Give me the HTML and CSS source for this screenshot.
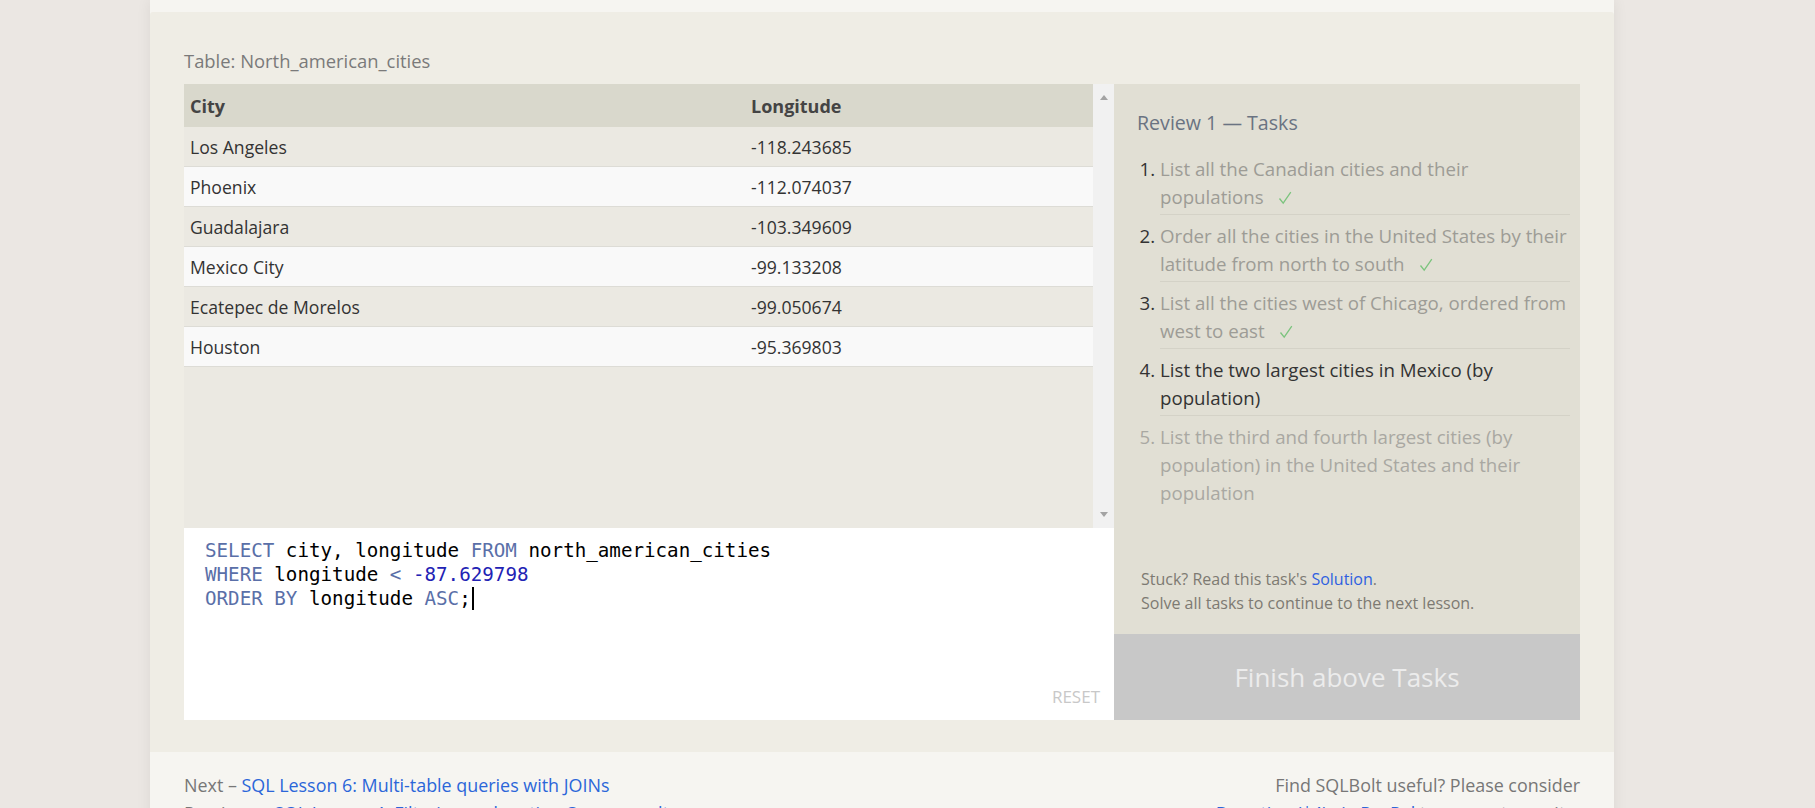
FILE: index.html
```html
<!DOCTYPE html>
<html>
<head>
<meta charset="utf-8">
<title>SQLBolt - Review 1</title>
<link rel="stylesheet" href="styles.css">
</head>
<body>
<div class="page">
  <div class="topband"></div>
  <div class="main">
    <div class="caption">Table: North_american_cities</div>
    <div class="exercise">
      <div class="left">
        <div class="results">
          <div class="table-wrap">
            <table>
              <thead>
                <tr><th class="c1">City</th><th>Longitude</th></tr>
              </thead>
              <tbody>
                <tr><td>Los Angeles</td><td>-118.243685</td></tr>
                <tr><td>Phoenix</td><td>-112.074037</td></tr>
                <tr><td>Guadalajara</td><td>-103.349609</td></tr>
                <tr><td>Mexico City</td><td>-99.133208</td></tr>
                <tr><td>Ecatepec de Morelos</td><td>-99.050674</td></tr>
                <tr><td>Houston</td><td>-95.369803</td></tr>
              </tbody>
            </table>
          </div>
          <div class="scrollbar"><span class="arrow up"></span><span class="arrow down"></span></div>
        </div>
        <div class="editor">
          <pre class="code"><span class="kw">SELECT</span> city, longitude <span class="kw">FROM</span> north_american_cities
<span class="kw">WHERE</span> longitude <span class="kw">&lt;</span> <span class="num">-87.629798</span>
<span class="kw">ORDER BY</span> longitude <span class="kw">ASC</span>;<span class="cursor"></span></pre>
          <div class="reset">RESET</div>
        </div>
      </div>
      <div class="right">
        <div class="tasks">
          <h3>Review 1 — Tasks</h3>
          <ol>
            <li class="done"><span class="t">List all the Canadian cities and their populations</span><svg class="check" width="14" height="14" viewBox="0 0 14 14"><path d="M1.5 7.5 L5.2 12.2 L12.8 1.2" fill="none" stroke="#7cc47e" stroke-width="1.3"/></svg></li>
            <li class="done"><span class="t">Order all the cities in the United States by their latitude from north to south</span><svg class="check" width="14" height="14" viewBox="0 0 14 14"><path d="M1.5 7.5 L5.2 12.2 L12.8 1.2" fill="none" stroke="#7cc47e" stroke-width="1.3"/></svg></li>
            <li class="done"><span class="t">List all the cities west of Chicago, ordered from west to east</span><svg class="check" width="14" height="14" viewBox="0 0 14 14"><path d="M1.5 7.5 L5.2 12.2 L12.8 1.2" fill="none" stroke="#7cc47e" stroke-width="1.3"/></svg></li>
            <li class="current">List the two largest cities in Mexico (by population)</li>
            <li class="todo">List the third and fourth largest cities (by population) in the United States and their population</li>
          </ol>
          <div class="hint">
            <div>Stuck? Read this task's <a href="#">Solution</a>.</div>
            <div>Solve all tasks to continue to the next lesson.</div>
          </div>
        </div>
        <div class="finish">Finish above Tasks</div>
      </div>
    </div>
  </div>
  <div class="footer">
    <div class="nav">
      <div>Next – <a href="#">SQL Lesson 6: Multi-table queries with JOINs</a></div>
      <div>Previous – <a href="#">SQL Lesson 4: Filtering and sorting Query results</a></div>
    </div>
    <div class="support">
      <div>Find SQLBolt useful? Please consider</div>
      <div><a href="#">Donating ($4) via PayPal</a> to support our site.</div>
    </div>
  </div>
</div>
</body>
</html>
```

FILE: styles.css
```css
html, body {
  margin: 0;
  padding: 0;
}
body {
  background: #ebe7e3;
  font-family: "Open Sans", "Noto Sans", sans-serif;
  overflow: hidden;
}
.page {
  width: 1464px;
  margin-left: 150px;
  background: #f6f5f1;
  box-shadow: 0 0 14px rgba(0, 0, 0, 0.07);
}
.topband {
  height: 12px;
  background: #f6f5f1;
}
.main {
  background: #efede5;
  padding: 37px 34px 32px;
  border-radius: 3px 3px 0 0;
}
.caption {
  font-size: 18.4px;
  line-height: 24px;
  color: #7a7a7a;
  margin-bottom: 11px;
}
.exercise {
  display: flex;
  height: 636px;
}
.left {
  width: 930px;
  display: flex;
  flex-direction: column;
}
.results {
  height: 444px;
  display: flex;
}
.table-wrap {
  flex: 1;
  background: #ebe9e2;
}
.scrollbar {
  width: 21px;
  background: #f1f1f1;
  display: flex;
  flex-direction: column;
  justify-content: space-between;
  align-items: center;
  padding: 11px 0;
  box-sizing: border-box;
}
.arrow {
  width: 0;
  height: 0;
  border-left: 4px solid transparent;
  border-right: 4px solid transparent;
}
.arrow.up {
  border-bottom: 5px solid #a3a3a3;
}
.arrow.down {
  border-top: 5px solid #a3a3a3;
}
table {
  width: 100%;
  border-collapse: collapse;
  font-size: 17.6px;
  color: #333;
}
th {
  background: #d9d8cc;
  height: 43px;
  text-align: left;
  padding: 0 6px;
  font-size: 18px;
  font-weight: 700;
  color: #444;
}
th.c1 {
  width: 549px;
}
td {
  height: 39px;
  padding: 0 6px;
  border-bottom: 1px solid #dddcd6;
}
tbody tr:nth-child(odd) td {
  background: #ebe9e2;
}
tbody tr:nth-child(even) td {
  background: #f9f9f9;
}
.editor {
  flex: 1;
  background: #fff;
  display: flex;
  flex-direction: column;
  padding: 11px 14px 12px 21px;
}
.code {
  margin: 0;
  flex: 1;
  font-family: "DejaVu Sans Mono", monospace;
  font-size: 19.2px;
  line-height: 24px;
  color: #000;
}
.kw {
  color: #5a6fa8;
}
.num {
  color: #2222b4;
}
.cursor {
  display: inline-block;
  width: 2px;
  height: 23px;
  background: #000;
  vertical-align: -5px;
  margin-left: 1px;
}
.reset {
  align-self: flex-end;
  font-size: 17px;
  line-height: 22px;
  color: #c8c8c8;
}
.right {
  flex: 1;
  background: #e1dfd4;
  display: flex;
  flex-direction: column;
}
.tasks {
  flex: 1;
  padding: 25px 10px 19px 23px;
  display: flex;
  flex-direction: column;
}
h3 {
  margin: 0;
  font-size: 19.6px;
  font-weight: 400;
  line-height: 28px;
  color: #6a7382;
}
ol {
  margin: 11px 0 0;
  padding-left: 23px;
  font-size: 18.7px;
  line-height: 28px;
}
li {
  padding: 7px 0 3px;
  border-bottom: 1px solid #d4d2c7;
  color: #333;
}
li:last-child {
  border-bottom: none;
}
li.done .t {
  color: #9d9c96;
}
li.todo {
  color: #a9a8a2;
}
.check {
  margin-left: 14px;
  vertical-align: -1px;
}
.hint {
  margin-top: auto;
  font-size: 16px;
  line-height: 24px;
  color: #7d7a72;
  padding-left: 4px;
}
.hint a {
  color: #2f5fe0;
  text-decoration: none;
}
.finish {
  height: 86px;
  background: #c8c8c8;
  color: #ececec;
  font-size: 26px;
  display: flex;
  align-items: center;
  justify-content: center;
}
.footer {
  display: flex;
  justify-content: space-between;
  padding: 19px 34px 20px;
  font-size: 17.9px;
  line-height: 28px;
  color: #777;
}
.footer a {
  color: #2b66d9;
  text-decoration: none;
}
.support {
  text-align: right;
}
```
